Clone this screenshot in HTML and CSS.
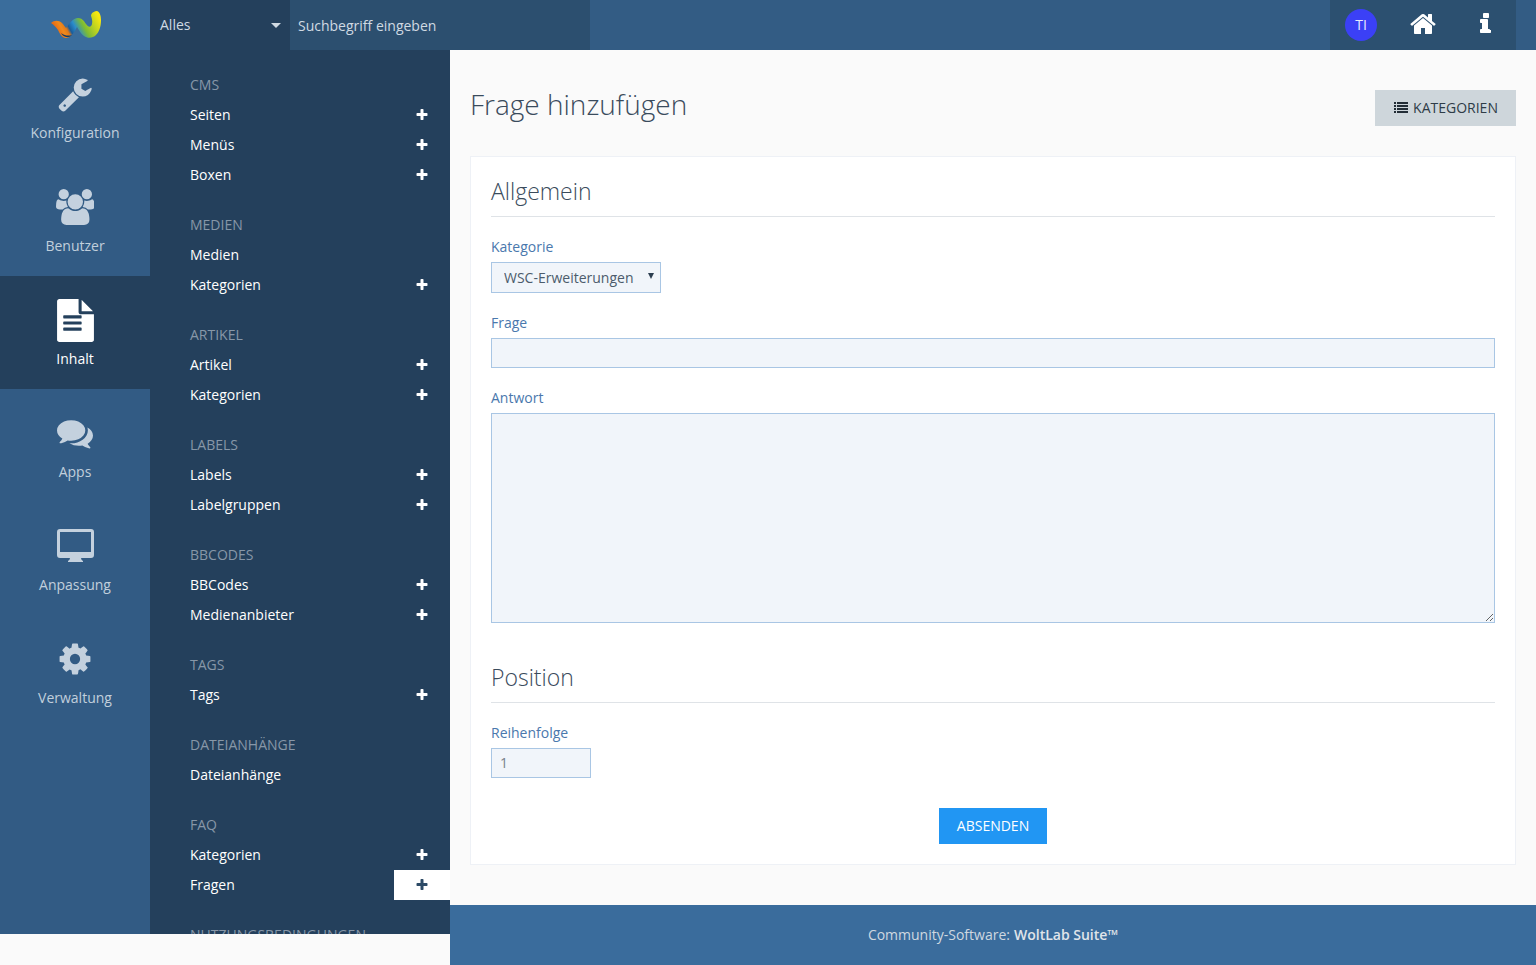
FILE: index.html
```html
<!DOCTYPE html>
<html lang="de">
<head>
<meta charset="utf-8">
<title>Frage hinzufügen</title>
<link rel="stylesheet" href="styles.css">
</head>
<body>
<svg class="defs" aria-hidden="true">
  <defs>
    <linearGradient id="wave" x1="0" x2="1" y1="0.65" y2="0.35">
      <stop offset="0" stop-color="#e2560f"/>
      <stop offset="0.2" stop-color="#f08a1c"/>
      <stop offset="0.28" stop-color="#e07a1a"/>
      <stop offset="0.34" stop-color="#1a5c9a"/>
      <stop offset="0.46" stop-color="#2a8ccc"/>
      <stop offset="0.62" stop-color="#7cbb35"/>
      <stop offset="0.84" stop-color="#c6d61e"/>
      <stop offset="1" stop-color="#f8e80f"/>
    </linearGradient>
    <symbol id="plus" viewBox="0 0 1792 1792"><path d="M1600 736v192q0 40-28 68t-68 28h-416v416q0 40-28 68t-68 28h-192q-40 0-68-28t-28-68v-416h-416q-40 0-68-28t-28-68v-192q0-40 28-68t68-28h416v-416q0-40 28-68t68-28h192q40 0 68 28t28 68v416h416q40 0 68 28t28 68z"/></symbol>
  </defs>
</svg>

<header class="topbar">
  <a class="logo" href="#">
    <svg class="logo-mark" viewBox="0 0 52 30"><path fill="url(#wave)" d="M1 13C4 10 9 10 12 13C14 15 15 17 16 18C19 14 23 8 28 8C32 8 34 11 36 14C38 17 41 18 42 14C43 10 41 7 41 5C42 2 45 1 47 1C50 2 51 6 51 10C51 17 49 22 46 25C43 28 38 29 34 26C31 24 29 20 27 17C25 21 21 28 16 28C12 28 10 24 8 20C6 17 4 15 1 13Z"/><path fill="#123a66" d="M11 23C13 27 18 29 22 25C19 26 15 26 11 23Z"/></svg>
  </a>
  <div class="search-scope"><span>Alles</span><i class="caret"></i></div>
  <div class="search-input">Suchbegriff eingeben</div>
  <nav class="user-nav">
    <a class="user-cell" href="#"><span class="avatar">TI</span></a>
    <a class="user-cell" href="#"><svg class="top-icon home" viewBox="0 0 1792 1792"><path d="M1472 992v480q0 26-19 45t-45 19h-384v-384h-256v384h-384q-26 0-45-19t-19-45v-480q0-1 .5-3t.5-3l575-474 575 474q1 2 1 6zm223-69l-62 74q-8 9-21 11h-3q-13 0-21-7l-692-577-692 577q-12 8-24 7-13-2-21-11l-62-74q-8-10-7-23.5t11-21.5l719-599q32-26 76-26t76 26l244 204v-195q0-14 9-23t23-9h192q14 0 23 9t9 23v408l219 182q10 8 11 21.5t-7 23.5z"/></svg></a>
    <a class="user-cell" href="#"><svg class="top-icon info" viewBox="0 0 704 1792"><path d="M704 1216v128q0 26-19 45t-45 19h-576q-26 0-45-19t-19-45v-128q0-26 19-45t45-19h64v-384h-64q-26 0-45-19t-19-45v-128q0-26 19-45t45-19h384q26 0 45 19t19 45v576h64q26 0 45 19t19 45zm-128-1024v192q0 26-19 45t-45 19h-256q-26 0-45-19t-19-45v-192q0-26 19-45t45-19h256q26 0 45 19t19 45z"/></svg></a>
  </nav>
</header>

<div class="layout">
  <aside class="sidebar">
    <nav class="main-menu">
      <a class="menu-item" href="#">
        <span class="menu-icon"><svg class="ic" viewBox="0 0 1792 1792"><path d="M448 1472q0-26-19-45t-45-19-45 19-19 45 19 45 45 19 45-19 19-45zm644-420l-682 682q-37 37-90 37-52 0-91-37l-106-108q-38-36-38-90 0-53 38-91l681-681q39 98 114.5 173.5t173.5 114.5zm634-435q0 39-23 106-47 134-164.5 217.5t-258.5 83.5q-185 0-316.5-131.5t-131.5-316.5 131.5-316.5 316.5-131.5q58 0 121.5 16.5t107.5 46.5q16 11 16 28t-16 28l-293 169v224l193 107q5-3 79-48.5t135.5-81 70.5-35.5q15 0 23.5 10t8.5 25z"/></svg></span>
        <span>Konfiguration</span>
      </a>
      <a class="menu-item" href="#">
        <span class="menu-icon"><svg class="ic users" viewBox="0 0 1920 1792"><path d="M593 896q-162 5-265 128h-134q-82 0-138-40.5t-56-118.5q0-353 124-353 6 0 43.5 21t97.5 42.5 119 21.5q67 0 133-23-5 37-5 66 0 139 81 256zm1071 637q0 120-73 189.5t-194 69.5h-874q-121 0-194-69.5t-73-189.5q0-53 3.5-103.5t14-109 26.5-108.5 43-97.5 62-81 85.5-53.5 111.5-20q10 0 43 21.5t73 48 107 48 135 21.5 135-21.5 107-48 73-48 43-21.5q61 0 111.5 20t85.5 53.5 62 81 43 97.5 26.5 108.5 14 109 3.5 103.5zm-1024-1277q0 106-75 181t-181 75-181-75-75-181 75-181 181-75 181 75 75 181zm704 384q0 159-112.5 271.5t-271.5 112.5-271.5-112.5-112.5-271.5 112.5-271.5 271.5-112.5 271.5 112.5 112.5 271.5zm576 225q0 78-56 118.5t-138 40.5h-134q-103-123-265-128 81-117 81-256 0-29-5-66 66 23 133 23 59 0 119-21.5t97.5-42.5 43.5-21q124 0 124 353zm-128-609q0 106-75 181t-181 75-181-75-75-181 75-181 181-75 181 75 75 181z"/></svg></span>
        <span>Benutzer</span>
      </a>
      <a class="menu-item active" href="#">
        <span class="menu-icon"><svg class="ic doc" viewBox="0 0 1536 1792"><path d="M1024 512v-472q22 14 36 28l408 408q14 14 28 36h-472zm-128 32q0 40 28 68t68 28h544v1056q0 40-28 68t-68 28h-1344q-40 0-68-28t-28-68v-1600q0-40 28-68t68-28h800v544zm128 744v-64q0-14-9-23t-23-9h-704q-14 0-23 9t-9 23v64q0 14 9 23t23 9h704q14 0 23-9t9-23zm0-256v-64q0-14-9-23t-23-9h-704q-14 0-23 9t-9 23v64q0 14 9 23t23 9h704q14 0 23-9t9-23zm0-256v-64q0-14-9-23t-23-9h-704q-14 0-23 9t-9 23v64q0 14 9 23t23 9h704q14 0 23-9t9-23z"/></svg></span>
        <span>Inhalt</span>
      </a>
      <a class="menu-item" href="#">
        <span class="menu-icon"><svg class="ic" viewBox="0 0 1792 1792"><path d="M1408 768q0 139-94 257t-256.5 186.5-353.5 68.5q-86 0-176-16-124 88-278 128-36 9-86 16h-3q-11 0-20.5-8t-11.5-21q-1-3-1-6.5t.5-6.5 2-6l2.5-5 3.5-5.5 4-5 4.5-5 4-4.5q5-6 23-25t26-29.5 22.5-29 25-38.5 20.5-44q-124-72-195-177t-71-224q0-139 94-257t256.5-186.5 353.5-68.5 353.5 68.5 256.5 186.5 94 257zm384 256q0 120-71 224.5t-195 176.5q10 24 20.5 44t25 38.5 22.5 29 26 29.5 23 25q1 1 4 4.5t4.5 5 4 5 3.5 5.5l2.5 5 2 6 .5 6.5-1 6.5q-3 14-13 22t-22 7q-50-7-86-16-154-40-278-128-90 16-176 16-271 0-472-132 58 4 88 4 161 0 309-45t264-129q125-92 192-212t67-254q0-77-23-152 129 71 204 178t75 230z"/></svg></span>
        <span>Apps</span>
      </a>
      <a class="menu-item" href="#">
        <span class="menu-icon"><svg class="ic desktop" viewBox="0 0 37 33"><path fill-rule="evenodd" d="M3 0H34Q37 0 37 3V26Q37 29 34 29H24Q24 31 26 32V33H11V32Q13 31 13 29H3Q0 29 0 26V3Q0 0 3 0ZM3 3V23H34V3Z"/></svg></span>
        <span>Anpassung</span>
      </a>
      <a class="menu-item" href="#">
        <span class="menu-icon"><svg class="ic" viewBox="0 0 1792 1792"><path d="M1152 896q0-106-75-181t-181-75-181 75-75 181 75 181 181 75 181-75 75-181zm512-109v222q0 12-8 23t-20 13l-185 28q-19 54-39 91 35 50 107 138 10 12 10 25t-9 23q-27 37-99 108t-94 71q-12 0-26-9l-138-108q-44 23-91 38-16 136-29 186-7 28-36 28h-222q-14 0-24.5-8.5t-11.5-21.5l-28-184q-49-16-90-37l-141 107q-10 9-25 9-14 0-25-11-126-114-165-168-7-10-7-23 0-12 8-23 15-21 51-66.5t54-70.5q-27-50-41-99l-183-27q-13-2-21-12.5t-8-23.5v-222q0-12 8-23t19-13l186-28q14-46 39-92-40-57-107-138-10-12-10-24 0-10 9-23 26-36 98.5-107.5t94.5-71.5q13 0 26 10l138 107q44-23 91-38 16-136 29-186 7-28 36-28h222q14 0 24.5 8.5t11.5 21.5l28 184q49 16 90 37l142-107q9-9 24-9 13 0 25 10 129 119 165 170 7 8 7 22 0 12-8 23-15 21-51 66.5t-54 70.5q26 50 41 98l183 28q13 2 21 12.5t8 23.5z"/></svg></span>
        <span>Verwaltung</span>
      </a>
    </nav>
    <nav class="sub-menu">
      <section class="group">
        <h3>CMS</h3>
        <div class="row"><a href="#">Seiten</a><span class="add"><svg><use href="#plus"/></svg></span></div>
        <div class="row"><a href="#">Menüs</a><span class="add"><svg><use href="#plus"/></svg></span></div>
        <div class="row"><a href="#">Boxen</a><span class="add"><svg><use href="#plus"/></svg></span></div>
      </section>
      <section class="group">
        <h3>Medien</h3>
        <div class="row"><a href="#">Medien</a></div>
        <div class="row"><a href="#">Kategorien</a><span class="add"><svg><use href="#plus"/></svg></span></div>
      </section>
      <section class="group">
        <h3>Artikel</h3>
        <div class="row"><a href="#">Artikel</a><span class="add"><svg><use href="#plus"/></svg></span></div>
        <div class="row"><a href="#">Kategorien</a><span class="add"><svg><use href="#plus"/></svg></span></div>
      </section>
      <section class="group">
        <h3>Labels</h3>
        <div class="row"><a href="#">Labels</a><span class="add"><svg><use href="#plus"/></svg></span></div>
        <div class="row"><a href="#">Labelgruppen</a><span class="add"><svg><use href="#plus"/></svg></span></div>
      </section>
      <section class="group">
        <h3>BBCodes</h3>
        <div class="row"><a href="#">BBCodes</a><span class="add"><svg><use href="#plus"/></svg></span></div>
        <div class="row"><a href="#">Medienanbieter</a><span class="add"><svg><use href="#plus"/></svg></span></div>
      </section>
      <section class="group">
        <h3>Tags</h3>
        <div class="row"><a href="#">Tags</a><span class="add"><svg><use href="#plus"/></svg></span></div>
      </section>
      <section class="group">
        <h3>Dateianhänge</h3>
        <div class="row"><a href="#">Dateianhänge</a></div>
      </section>
      <section class="group">
        <h3>FAQ</h3>
        <div class="row"><a href="#">Kategorien</a><span class="add"><svg><use href="#plus"/></svg></span></div>
        <div class="row"><a href="#">Fragen</a><span class="add current"><svg><use href="#plus"/></svg></span></div>
      </section>
      <section class="group">
        <h3>Nutzungsbedingungen</h3>
      </section>
    </nav>
  </aside>

  <div class="main-col">
    <main class="content">
      <div class="page-head">
        <h1>Frage hinzufügen</h1>
        <a class="btn-secondary" href="#">
          <svg class="list-icon" viewBox="0 0 14 12"><path d="M0 0h2v2H0zM3 0h11v2H3zM0 3h2v2H0zM3 3h11v2H3zM0 6h2v2H0zM3 6h11v2H3zM0 9h2v2H0zM3 9h11v2H3z"/></svg>
          <span>KATEGORIEN</span>
        </a>
      </div>
      <form class="card">
        <h2>Allgemein</h2>
        <label class="field">
          <span>Kategorie</span>
          <span class="select-wrap"><select class="select"><option>WSC-Erweiterungen</option></select></span>
        </label>
        <label class="field">
          <span>Frage</span>
          <input class="input" type="text">
        </label>
        <label class="field">
          <span>Antwort</span>
          <textarea class="input textarea"></textarea>
        </label>
        <h2 class="second">Position</h2>
        <label class="field">
          <span>Reihenfolge</span>
          <input class="input short" type="text" value="1">
        </label>
        <div class="submit-row"><button class="btn-primary" type="button">ABSENDEN</button></div>
      </form>
    </main>
    <footer class="footer">Community-Software: <strong>WoltLab Suite™</strong></footer>
  </div>
</div>
</body>
</html>
```

FILE: styles.css
```css
* { box-sizing: border-box; }
html, body { margin: 0; height: 965px; overflow: hidden; }
body {
  background: #fafafa;
  font-family: "Open Sans", "Noto Sans", sans-serif;
  font-size: 14px;
  line-height: 20px;
  color: #3a4b5c;
}
a { color: inherit; text-decoration: none; }
.defs { position: absolute; width: 0; height: 0; }

.topbar { display: flex; height: 50px; background: #335c84; color: #fff; }
.logo { width: 150px; background: #3a6d9c; display: flex; align-items: center; justify-content: center; }
.logo-mark { width: 52px; height: 30px; margin-left: 2px; }
.search-scope {
  width: 140px; background: #24405c; color: #d0dae3;
  display: flex; align-items: center; justify-content: space-between;
  padding: 0 9px 0 10px;
}
.caret { width: 0; height: 0; border: 5px solid transparent; border-top-color: #d0dae3; border-bottom: 0; }
.search-input {
  width: 300px; background: #2c4f6f; color: #d0dae3;
  display: flex; align-items: center; padding: 2px 8px 0;
}
.user-nav { margin-left: auto; margin-right: 20px; display: flex; background: #2c5070; }
.user-cell { width: 62px; display: flex; align-items: center; justify-content: center; }
.avatar {
  width: 32px; height: 32px; border-radius: 50%; background: #3b40f6;
  display: flex; align-items: center; justify-content: center;
  color: #e8eaff; font-size: 14px;
}
.top-icon { fill: #fff; height: 28px; }
.home { width: 28px; margin-bottom: 2px; }
.info { width: 11px; }

.layout { display: flex; height: 915px; }
.sidebar { width: 450px; height: 884px; display: flex; overflow: hidden; flex: none; }
.main-menu { width: 150px; background: #325b84; flex: none; }
.menu-item {
  height: 113px; display: flex; flex-direction: column; align-items: center;
  padding-top: 24px; color: #c1cfdc; text-align: center;
}
.menu-item.active { background: #24405c; color: #fff; }
.menu-icon { height: 40px; margin-bottom: 9px; display: flex; align-items: center; justify-content: center; }
.ic { height: 36px; width: 36px; fill: #c4d1de; }
.ic.users { width: 38.6px; }
.ic.doc { height: 43px; width: 37px; fill: #fff; }
.ic.desktop { height: 33px; width: 37px; margin-bottom: 2px; }

.sub-menu { width: 300px; background: #24405c; padding-top: 20px; }
.group { margin-bottom: 20px; }
.group h3 {
  margin: 0; height: 30px; line-height: 30px; padding-left: 40px;
  font-size: 14px; font-weight: 400; text-transform: uppercase; color: #8797a8;
}
.row { height: 30px; display: flex; align-items: center; justify-content: space-between; padding-left: 40px; color: #fff; }
.add { width: 56px; height: 30px; display: flex; align-items: center; justify-content: center; }
.add svg { width: 14px; height: 14px; fill: #fff; }
.add.current { background: #fff; }
.add.current svg { fill: #2d4a66; }

.main-col { flex: 1; display: flex; flex-direction: column; min-width: 0; }
.content { flex: 1; padding: 40px 20px 0; }
.page-head { display: flex; justify-content: space-between; margin-bottom: 30px; }
h1 { margin: 0; font-size: 28px; line-height: 28px; font-weight: 300; color: #3a4b5c; }
.btn-secondary {
  height: 36px; width: 141px; padding-left: 1px; background: #ced6db; color: #2e3c47;
  display: flex; align-items: center; justify-content: center; gap: 5px;
}
.list-icon { width: 14px; height: 12px; fill: #222d36; }

.card { background: #fff; border: 1px solid #eef1f6; padding: 20px; height: 709px; }
h2 {
  margin: 0 0 20px; font-size: 23px; line-height: 28px; font-weight: 300; color: #3a4b5c;
  padding-bottom: 11px; border-bottom: 1px solid #dfe3e7;
}
h2.second { margin-top: 40px; }
.field { display: block; margin-bottom: 20px; }
.field > span:first-child { display: block; color: #4a78ad; margin-bottom: 5px; }
.select-wrap { display: block; position: relative; width: 170px; }
.select-wrap::after {
  content: ""; position: absolute; right: 7px; top: 11px; pointer-events: none;
  border: 3.5px solid transparent; border-top: 6px solid #2c3e50; border-bottom: 0;
}
.select, .input {
  display: block; background: #f1f5fa; border: 1px solid #a9c6e4; color: #4c5c6c;
  font: 14px/20px "Open Sans", "Noto Sans", sans-serif; border-radius: 0; outline: 0;
}
.select { width: 170px; height: 31px; padding: 0 12px; appearance: none; }
.input { width: 100%; height: 30px; padding: 0 8px; }
.textarea { height: 210px; }
.input.short { width: 100px; padding-bottom: 2px; color: #7a828a; }
.submit-row { display: flex; justify-content: center; margin-top: 30px; }
.btn-primary {
  width: 108px; height: 36px; background: #2196f3; color: #fff; border: 0; padding: 0;
  font: 14px/20px "Open Sans", "Noto Sans", sans-serif;
}

.footer {
  height: 60px; background: #3a6c9c; color: #cfd8e0;
  display: flex; align-items: center; justify-content: center; gap: 4px;
}
.footer strong { font-weight: 600; color: #e0e5ea; }
```
